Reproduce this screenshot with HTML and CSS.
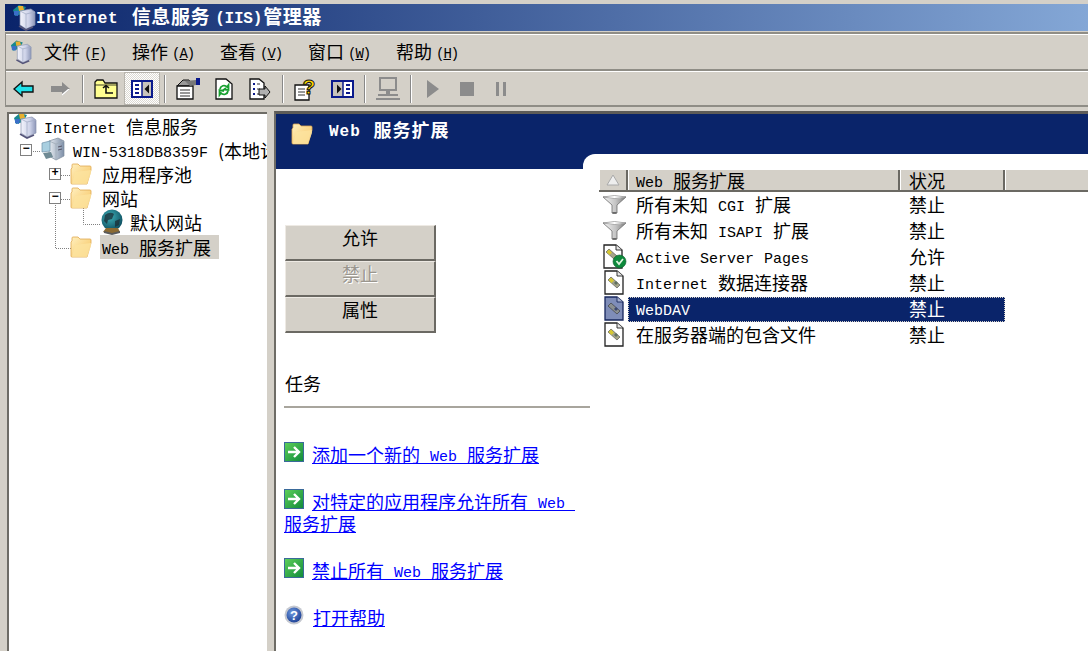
FILE: index.html
```html
<!DOCTYPE html>
<html lang="zh-CN">
<head>
<meta charset="utf-8">
<title>Internet 信息服务 (IIS)管理器</title>
<link rel="stylesheet" href="styles.css">
</head>
<body>
<svg class="defs" width="0" height="0">
  <defs>
    <linearGradient id="fold" x1="0" y1="0" x2="1" y2="1"><stop offset="0" stop-color="#fff0c0"/><stop offset="1" stop-color="#f6c25c"/></linearGradient>
    <linearGradient id="box" x1="0" y1="0" x2="1" y2="0"><stop offset="0" stop-color="#f2f3fb"/><stop offset=".6" stop-color="#cdd2e8"/><stop offset="1" stop-color="#8d97b8"/></linearGradient>
    <linearGradient id="sbox" x1="0" y1="0" x2="1" y2="0"><stop offset="0" stop-color="#e8edf2"/><stop offset="1" stop-color="#7e8fa8"/></linearGradient>
    <linearGradient id="green" x1="0" y1="0" x2="1" y2="1"><stop offset="0" stop-color="#5fd05a"/><stop offset="1" stop-color="#0f8a3a"/></linearGradient>
    <linearGradient id="cone" x1="0" y1="0" x2="1" y2="0"><stop offset="0" stop-color="#f4f4f4"/><stop offset=".55" stop-color="#c4c4c4"/><stop offset="1" stop-color="#7c7c7c"/></linearGradient>
    <radialGradient id="hb" cx=".4" cy=".35" r=".7"><stop offset="0" stop-color="#6f9be0"/><stop offset="1" stop-color="#1c3f94"/></radialGradient>
    <radialGradient id="gl" cx=".4" cy=".35" r=".7"><stop offset="0" stop-color="#3fb0b8"/><stop offset="1" stop-color="#0b4a5c"/></radialGradient>
    <symbol id="i-folder" viewBox="0 0 22 22">
      <path d="M1 6 L1 20 Q1 21 2 21 L17 21 L21 7 L21 4 Q21 3 20 3 L10 3 L8 1 L3 1 Q2 1 2 2 L2 5 Z" fill="url(#fold)" stroke="#e0a850" stroke-width=".8"/>
      <path d="M2 21 L5 9 L21 7 L21 10 L17 21 Z" fill="#fde3a0" opacity=".8"/>
    </symbol>
    <symbol id="i-app" viewBox="0 0 24 26">
      <path d="M1 5 L7 0 L14 2 L10 9 L3 11 Z" fill="#17898f"/>
      <path d="M6 1 L11 1 L12 5 L7 6 Z" fill="#e8b030"/>
      <path d="M2 6 L7 6 L6 11 L2 10 Z" fill="#3a6fc8"/>
      <path d="M8 6 L19 4 L23 7 L23 20 L14 24 L8 20 Z" fill="url(#box)" stroke="#8a94b0" stroke-width=".7"/>
      <path d="M8 6 L14 9 L23 7 M14 9 L14 24" fill="none" stroke="#a5adc6" stroke-width=".8"/>
      <path d="M7 21 L14 25 L21 22" fill="none" stroke="#55557a" stroke-width="1.6"/>
    </symbol>
    <symbol id="i-server" viewBox="0 0 24 26">
      <path d="M8 4 L17 1 L23 4 L23 19 L15 23 L8 19 Z" fill="url(#sbox)" stroke="#7e8c9c" stroke-width=".7"/>
      <path d="M8 4 L15 7 L23 4 M15 7 L15 23" fill="none" stroke="#a0acb8" stroke-width=".8"/>
      <path d="M1 6 L9 4 L9 14 L1 15 Z" fill="#a9cfe0" stroke="#6f8fa8" stroke-width=".7"/>
      <path d="M2 16 L10 15 L12 20 L5 22 Z" fill="#6f8a94"/>
      <path d="M17 10 L21 9 M17 13 L21 12" stroke="#556" stroke-width="1"/>
    </symbol>
    <symbol id="i-globe" viewBox="0 0 24 26">
      <circle cx="12" cy="11" r="10.5" fill="url(#gl)"/>
      <path d="M5 6 Q10 2 14 5 L12 10 L8 11 L7 15 L4 12 Z M15 12 L20 10 L19 16 L15 18 Z" fill="#1b2c34" opacity=".75"/>
      <path d="M6 19 L3 23 L11 25 L20 23 L18 19 Z" fill="#8b6a32"/>
      <path d="M4 22 L12 24 L20 22 L20 24 L12 26 L4 24 Z" fill="#5b5b5b"/>
    </symbol>
    <symbol id="i-filter" viewBox="0 0 25 19">
      <path d="M1 2 L24 2 L15 10 L15 18 L10 18 L10 10 Z" fill="url(#cone)" stroke="#6c6c6c" stroke-width=".8"/>
      <path d="M1 2 Q12.5 -1 24 2 Q12.5 5 1 2 Z" fill="#fff" stroke="#8c8c8c" stroke-width=".7"/>
      <path d="M10.5 18 L14.5 18" stroke="#444" stroke-width="1.2"/>
    </symbol>
    <symbol id="i-doc" viewBox="0 0 20 25">
      <path d="M1 1 L13 1 L19 6 L19 24 L1 24 Z" fill="#fff" stroke="#222" stroke-width="1.3"/>
      <path d="M13 1 L13 6 L19 6" fill="#e8e8e8" stroke="#222" stroke-width=".9"/>
      <path d="M4 10 L7 7 L16 15 L13 18 Z" fill="#a4a488" stroke="#444" stroke-width=".6"/>
      <path d="M4.500 10 L7 7.500 L10 10.500 L7.500 13 Z" fill="#d6c832"/>
      <path d="M10 13 L12 11 L14 13 L12 15 Z" fill="#5f6f5f"/>
    </symbol>
    <symbol id="i-docsel" viewBox="0 0 20 25">
      <path d="M1 1 L13 1 L19 6 L19 24 L1 24 Z" fill="#7f8db8" stroke="#16265c" stroke-width="1.3"/>
      <path d="M13 1 L13 6 L19 6" fill="#a4aecc" stroke="#16265c" stroke-width=".9"/>
      <path d="M4 10 L7 7 L16 15 L13 18 Z" fill="#8a8f90" stroke="#333" stroke-width=".6"/>
      <path d="M10 13 L12 11 L14 13 L12 15 Z" fill="#3c4870"/>
    </symbol>
    <symbol id="i-docok" viewBox="0 0 24 25">
      <path d="M1 1 L13 1 L19 6 L19 24 L1 24 Z" fill="#fff" stroke="#222" stroke-width="1.3"/>
      <path d="M13 1 L13 6 L19 6" fill="#e8e8e8" stroke="#222" stroke-width=".9"/>
      <path d="M3 8 L6 5 L14 12 L11 15 Z" fill="#a4a488" stroke="#444" stroke-width=".6"/>
      <path d="M3.500 8 L6 5.500 L9 8.500 L6.500 11 Z" fill="#d6c832"/>
      <circle cx="16.500" cy="17.500" r="6.500" fill="#0d8a3c" stroke="#0a5a28" stroke-width=".6"/>
      <path d="M13.500 17 L16 20 L20 15" fill="none" stroke="#dff5df" stroke-width="1.8"/>
    </symbol>
    <symbol id="i-go" viewBox="0 0 20 20">
      <rect x=".5" y=".5" width="19" height="19" fill="url(#green)" stroke="#3a6a9a"/>
      <path d="M4 10 L14 10 M10 5 L15 10 L10 15" fill="none" stroke="#fff" stroke-width="2.4"/>
    </symbol>
    <symbol id="i-help" viewBox="0 0 20 20">
      <circle cx="10" cy="10" r="9.500" fill="#c5c8d0"/>
      <circle cx="10" cy="10" r="7.500" fill="url(#hb)"/>
      <text class="help-q" x="10" y="15">?</text>
    </symbol>
  </defs>
</svg>

<div class="window">
  <div class="titlebar">
    <svg class="title-icon"><use href="#i-app"/></svg>
    <span class="title-text"><span class="lat">Internet </span>信息服务<span class="lat tight">(IIS)</span>管理器</span>
  </div>

  <div class="bars">
    <div class="menubar">
      <svg class="menu-icon"><use href="#i-app"/></svg>
      <span class="menu-item">文件<span class="mn">(<u>F</u>)</span></span>
      <span class="menu-item">操作<span class="mn">(<u>A</u>)</span></span>
      <span class="menu-item">查看<span class="mn">(<u>V</u>)</span></span>
      <span class="menu-item">窗口<span class="mn">(<u>W</u>)</span></span>
      <span class="menu-item">帮助<span class="mn">(<u>H</u>)</span></span>
    </div>
    <div class="toolbar">
      <span class="tb"><svg width="22" height="18" viewBox="0 0 22 18"><path d="M1 9 L9 2 L9 6 L20 6 L20 12 L9 12 L9 16 Z" fill="#1fe0e8" stroke="#111" stroke-width="1.4"/></svg></span>
      <span class="tb"><svg width="22" height="18" viewBox="0 0 22 18"><path d="M21 9 L13 2 L13 6 L2 6 L2 12 L13 12 L13 16 Z" fill="#8c8c8c"/><path d="M13 16 L21 9 L19 9 L13 14Z" fill="#fff"/></svg></span>
      <span class="sep"></span>
      <span class="tb"><svg width="24" height="20" viewBox="0 0 24 20"><path d="M1 19 L1 3 L3 1 L9 1 L11 4 L23 4 L23 19 Z" fill="#ffff90" stroke="#111" stroke-width="1.3"/><path d="M1 6 L23 6" stroke="#111" stroke-width=".8"/><path d="M9 9 L12 6.500 L15 9 M12 7 L12 14 L19 14" fill="none" stroke="#111" stroke-width="1.600"/></svg></span>
      <span class="tb on"><svg width="22" height="18" viewBox="0 0 22 18"><rect x="1" y="1" width="20" height="16" fill="#fff" stroke="#0a1a8c" stroke-width="2"/><rect x="11" y="2" width="9" height="14" fill="#c8c4bc"/><path d="M11 1 L11 17" stroke="#0a1a8c" stroke-width="1.500"/><path d="M4 5 H8 M4 9 H8 M4 13 H8" stroke="#0a1a8c" stroke-width="1.800"/><path d="M18 4.500 L13.500 9 L18 13.500 Z" fill="#111"/></svg></span>
      <span class="sep"></span>
      <span class="tb"><svg width="26" height="22" viewBox="0 0 26 22"><path d="M2 8 L8 2 L14 2 L18 8 Z" fill="#999" stroke="#111"/><path d="M2 8 L18 8 L18 21 L2 21 Z" fill="#fff" stroke="#111" stroke-width="1.300"/><path d="M5 12 H15 M5 15 H15 M5 18 H15" stroke="#333" stroke-width="1.200"/><path d="M10 3 L21 2 L21 7 L15 8 Z" fill="#777"/><path d="M21 0 H25 V7 H21Z" fill="#0a1a8c"/></svg></span>
      <span class="tb"><svg width="18" height="22" viewBox="0 0 18 22"><path d="M1 1 L11 1 L17 6 L17 21 L1 21 Z" fill="#fff" stroke="#111" stroke-width="1.300"/><path d="M5 11 A4 4 0 0 1 12 9 L13.500 7 L13.500 12 L9 11.500 L11 10" fill="none" stroke="#18a030" stroke-width="1.800"/><path d="M13 13 A4 4 0 0 1 6 15 L4.500 17 L4.500 12 L9 13" fill="none" stroke="#18a030" stroke-width="1.800"/></svg></span>
      <span class="tb"><svg width="22" height="22" viewBox="0 0 22 22"><path d="M1 1 L10 1 L15 5 L15 21 L1 21 Z" fill="#fff" stroke="#111" stroke-width="1.300"/><path d="M4 6 H6 M4 11 H6 M4 16 H6" stroke="#0a1a8c" stroke-width="2"/><path d="M8 6 H11 M8 11 H11 M8 16 H11" stroke="#333" stroke-width="1.200"/><path d="M10 11 L16 11 L16 8 L21 14 L16 20 L16 17 L10 17 Z" fill="#b0b0b0" stroke="#111"/></svg></span>
      <span class="sep"></span>
      <span class="tb"><svg width="24" height="24" viewBox="0 0 24 24"><path d="M1 8 L15 8 L15 23 L1 23 Z" fill="#fff" stroke="#111" stroke-width="1.300"/><path d="M4 12 H11 M4 15 H11 M4 18 H11" stroke="#333"/><text class="tb-q" x="15" y="17">?</text></svg></span>
      <span class="tb"><svg width="23" height="18" viewBox="0 0 23 18"><rect x="1" y="1" width="21" height="16" fill="#fff" stroke="#0a1a8c" stroke-width="2"/><rect x="2" y="2" width="10" height="14" fill="#c8c4bc"/><path d="M12 1 L12 17" stroke="#0a1a8c" stroke-width="1.500"/><path d="M15 5 H19 M15 9 H19 M15 13 H19" stroke="#0a1a8c" stroke-width="1.800"/><path d="M6 4.500 L10.500 9 L6 13.500 Z" fill="#111"/></svg></span>
      <span class="sep"></span>
      <span class="tb"><svg width="26" height="24" viewBox="0 0 26 24"><rect x="5" y="1" width="16" height="12" fill="none" stroke="#8c8c8c" stroke-width="2"/><path d="M11 14 H15 V17 H11Z M3 17 H23 V19 H3Z" fill="#8c8c8c"/><path d="M1 22 H25" stroke="#8c8c8c" stroke-width="2"/></svg></span>
      <span class="sep"></span>
      <span class="tb nar"><svg width="14" height="18" viewBox="0 0 14 18"><path d="M1 0 L13 9 L1 18 Z" fill="#8c8c8c"/></svg></span>
      <span class="tb nar"><svg width="14" height="14" viewBox="0 0 14 14"><rect width="14" height="14" fill="#8c8c8c"/></svg></span>
      <span class="tb nar"><svg width="12" height="14" viewBox="0 0 12 14"><path d="M1 0 H4 V14 H1Z M8 0 H11 V14 H8Z" fill="#8c8c8c"/></svg></span>
    </div>
  </div>

  <div class="main">
    <div class="tree">
      <svg class="tree-lines" width="120" height="140" viewBox="0 0 120 140">
        <path d="M33 42.500 H41 M61 66.500 H71 M61 90.500 H71 M55.500 96 V139.500 H71 M83.500 99 V115.500 H100" fill="none" stroke="#808080" stroke-dasharray="1 1"/>
      </svg>
      <div class="node l0"><svg class="ti ti-app"><use href="#i-app"/></svg><span class="tl"><span class="lat">Internet </span>信息服务</span></div>
      <div class="node l1"><span class="exp">−</span><svg class="ti ti-sv"><use href="#i-server"/></svg><span class="tl"><span class="lat">WIN-5318DB8359F </span>(本地计算机)</span></div>
      <div class="node l2"><span class="exp">+</span><svg class="ti ti-f"><use href="#i-folder"/></svg><span class="tl">应用程序池</span></div>
      <div class="node l2"><span class="exp">−</span><svg class="ti ti-f"><use href="#i-folder"/></svg><span class="tl">网站</span></div>
      <div class="node l3"><svg class="ti ti-g"><use href="#i-globe"/></svg><span class="tl">默认网站</span></div>
      <div class="node l2b"><svg class="ti ti-f"><use href="#i-folder"/></svg><span class="tl sel"><span class="lat">Web </span>服务扩展</span></div>
    </div>

    <div class="splitter"></div>

    <div class="detail">
      <div class="banner">
        <svg class="banner-icon"><use href="#i-folder"/></svg>
        <span class="banner-text"><span class="lat">Web </span>服务扩展</span>
      </div>
      <div class="detail-body">
        <div class="side">
          <div class="btns">
            <div class="btn">允许</div>
            <div class="btn off">禁止</div>
            <div class="btn">属性</div>
          </div>
          <div class="tasks-h">任务</div>
          <div class="task t1"><svg class="go"><use href="#i-go"/></svg><a href="#">添加一个新的<span class="lat"> Web </span>服务扩展</a></div>
          <div class="task t2"><svg class="go"><use href="#i-go"/></svg><a href="#">对特定的应用程序允许所有<span class="lat"> Web&nbsp;</span><br>服务扩展</a></div>
          <div class="task t3"><svg class="go"><use href="#i-go"/></svg><a href="#">禁止所有<span class="lat"> Web </span>服务扩展</a></div>
          <div class="task t4"><svg class="go hp"><use href="#i-help"/></svg><a href="#">打开帮助</a></div>
        </div>
        <div class="list">
          <div class="lhead">
            <span class="lh c0"><svg width="14" height="12" viewBox="0 0 14 12"><path d="M7 1 L13 11 L1 11 Z" fill="#eee" stroke="#aaa"/></svg></span>
            <span class="lh c1"><span class="lat">Web </span>服务扩展</span>
            <span class="lh c2">状况</span>
            <span class="lh c3"></span>
          </div>
          <div class="row"><span class="ri"><svg class="ic-f"><use href="#i-filter"/></svg></span><span class="c1t">所有未知<span class="lat"> CGI </span>扩展</span><span class="c2t">禁止</span></div>
          <div class="row"><span class="ri"><svg class="ic-f"><use href="#i-filter"/></svg></span><span class="c1t">所有未知<span class="lat"> ISAPI </span>扩展</span><span class="c2t">禁止</span></div>
          <div class="row"><span class="ri"><svg class="ic-d2"><use href="#i-docok"/></svg></span><span class="c1t"><span class="lat">Active Server Pages</span></span><span class="c2t">允许</span></div>
          <div class="row"><span class="ri"><svg class="ic-d"><use href="#i-doc"/></svg></span><span class="c1t"><span class="lat">Internet </span>数据连接器</span><span class="c2t">禁止</span></div>
          <div class="row active"><span class="ri"><svg class="ic-d"><use href="#i-docsel"/></svg></span><span class="selbar"><span class="c1t"><span class="lat">WebDAV</span></span><span class="c2t">禁止</span></span></div>
          <div class="row"><span class="ri"><svg class="ic-d"><use href="#i-doc"/></svg></span><span class="c1t">在服务器端的包含文件</span><span class="c2t">禁止</span></div>
        </div>
      </div>
    </div>
  </div>
</div>
</body>
</html>
```
FILE: styles.css
```css
* { box-sizing: border-box; }
html, body { margin: 0; padding: 0; }
body {
  width: 1088px; height: 651px; overflow: hidden;
  background: #d4d0c8; color: #000;
  font-family: "Noto Sans CJK SC", "Liberation Mono", monospace;
  font-size: 18px; line-height: 24px;
}
.defs { position: absolute; }
.lat { font-family: "Liberation Mono", monospace; font-size: 15px; line-height: 12px; word-spacing: 1px; vertical-align: 1px; }
.window { display: flex; flex-direction: column; height: 651px; padding-top: 4px; }

.titlebar {
  height: 27px; margin-left: 5px; flex: none;
  background: linear-gradient(90deg, #0a246a 0%, #84a7d6 100%);
  display: flex; align-items: center; color: #fff; font-weight: 700;
}
.title-icon { width: 24px; height: 26px; margin-left: 7px; flex: none; }
.title-text { font-size: 19px; letter-spacing: .6px; white-space: nowrap; padding-bottom: 3px; }
.title-text .lat { font-size: 16px; letter-spacing: .7px; font-weight: 700; margin-right: 2px; }
.title-text .tight { margin: 0 1px 0 5px; letter-spacing: -.2px; }

.bars { margin-left: 5px; border-left: 1px solid #8f8d86; border-top: 2px solid #8f8d86; margin-top: 1px; border-bottom: 2px solid #8f8d86; height: 75px; flex: none; }
.menubar { height: 37px; display: flex; align-items: center; border-top: 1px solid #fff; border-bottom: 2px solid #8f8d86; padding-left: 4px; }
.menu-icon { width: 22px; height: 25px; flex: none; margin-right: 12px; }
.menu-item { width: 88px; flex: none; white-space: nowrap; padding-bottom: 3px; }
.mn { font-family: "Liberation Mono", monospace; font-size: 14px; line-height: 12px; margin-left: 4px; letter-spacing: -1px; position: relative; top: -1px; }
.toolbar { height: 34px; display: flex; align-items: center; border-top: 1px solid #fff; }
.tb { width: 36px; height: 33px; flex: none; display: flex; align-items: center; justify-content: center; }
.tb.nar { width: 34px; }
.tb.on {
  background: repeating-conic-gradient(#fff 0 25%, #dcd9d2 0 50%) 0 0 / 2px 2px;
  border: 1px solid #b8b5ae;
}
.sep { width: 10px; height: 28px; flex: none; background: linear-gradient(90deg, transparent 4px, #888 4px, #888 5px, #fff 5px, #fff 6px, transparent 6px); }
.tb-q { font: 700 21px "Liberation Sans", sans-serif; fill: #ffd800; stroke: #111; stroke-width: 1px; text-anchor: middle; }
.help-q { font: 700 13px "Liberation Sans", sans-serif; fill: #fff; text-anchor: middle; }

.main { flex: 1; min-height: 0; display: flex; margin-top: 4px; padding-left: 7px; }
.tree {
  width: 260px; flex: none; background: #fff; position: relative; overflow: hidden; margin-top: 1px;
  border-top: 2px solid #6e6c66; border-left: 2px solid #6e6c66;
}
.tree-lines { position: absolute; left: -9px; top: -5px; }
.node { height: 24px; display: flex; align-items: center; white-space: nowrap; position: relative; }
.l0 { padding-left: 4px; }
.l1 { padding-left: 11px; }
.l2 { padding-left: 40px; }
.l2b { padding-left: 61px; margin-top: 1px; }
.l3 { padding-left: 91px; }
.exp {
  width: 12px; height: 12px; border: 1px solid #808080; background: #fff; flex: none;
  font: 700 12px/9px "Liberation Mono", monospace; text-align: center;
}
.ti { flex: none; }
.ti-app { width: 24px; height: 26px; margin-right: 7px; }
.ti-sv { width: 24px; height: 26px; margin-left: 9px; margin-right: 8px; }
.ti-f { width: 22px; height: 22px; margin-left: 9px; margin-right: 10px; }
.l2b .ti-f { margin-left: 0; margin-right: 8px; }
.ti-g { width: 24px; height: 26px; margin-right: 6px; }
.tl { display: block; }
.sel { background: #d4d0c8; height: 24px; width: 119px; padding-left: 2px; }

.splitter { width: 7px; flex: none; }
.detail { flex: 1; min-width: 0; display: flex; flex-direction: column; background: #fff; border-left: 2px solid #6e6c66; border-top: 3px solid #5e5c58; }
.banner { height: 55px; flex: none; background: #0a246a; display: flex; align-items: flex-start; padding-left: 15px; padding-top: 9px; position: relative; }
.banner::after {
  content: ""; position: absolute; left: 307px; right: 0; bottom: 0; height: 15px;
  background: #fff; border-top-left-radius: 12px;
}
.banner-icon { width: 22px; height: 22px; flex: none; margin-right: 16px; }
.banner-text { color: #fff; font-weight: 700; font-size: 18px; letter-spacing: 1px; line-height: 18px; margin-top: -3px; white-space: nowrap; }
.banner-text .lat { font-weight: 700; font-size: 16px; margin-right: 1px; }

.detail-body { flex: 1; display: flex; min-height: 0; }
.side { width: 323px; flex: none; padding: 56px 0 0 8px; }
.btns { width: 151px; margin-left: 1px; display: flex; flex-direction: column; }
.btn {
  height: 36px; background: #d4d0c8; text-align: center; line-height: 22px;
  border-top: 1px solid #eeeae4; border-left: 1px solid #eeeae4;
  border-right: 2px solid #6b6963; border-bottom: 2px solid #6b6963;
}
.btn.off { color: #9a968e; text-shadow: 1px 1px 0 #fff; }
.tasks-h { margin-top: 38px; height: 37px; line-height: 24px; width: 306px; border-bottom: 2px solid #a8a59d; padding-left: 1px; }
.task { white-space: nowrap; }
.task a { color: #0000ff; text-decoration: underline; }
.go { width: 20px; height: 20px; margin: -8px 8px 0 0; vertical-align: 0; }
.go.hp { margin-right: 9px; }
.t1 { margin-top: 34px; }
.t2 { margin-top: 24px; line-height: 22px; }
.t3 { margin-top: 24px; }
.t4 { margin-top: 23px; }

.list { flex: 1; min-width: 0; margin-top: 1px; }
.lhead { height: 22px; display: flex; background: #d4d0c8; border-bottom: 2px solid #6b6963; margin-bottom: -1px; }
.lh { height: 20px; line-height: 20px; border-right: 2px solid #6b6963; border-left: 1px solid #fff; flex: none; padding-left: 7px; white-space: nowrap; }
.c0 { width: 29px; padding-left: 6px; display: flex; align-items: center; }
.c1 { width: 272px; }
.c2 { width: 105px; padding-left: 8px; }
.c3 { flex: 1; border-right: 0; }
.row { height: 26px; display: flex; align-items: center; white-space: nowrap; }
.ri { width: 29px; flex: none; display: flex; justify-content: center; padding-left: 1px; }
.ic-f { width: 25px; height: 19px; }
.ic-d { width: 20px; height: 25px; }
.ic-d2 { width: 24px; height: 25px; margin-left: 2px; }
.c1t { width: 281px; padding-left: 8px; flex: none; }
.c2t { width: 96px; flex: none; }
.selbar { display: flex; width: 377px; height: 25px; align-items: center; background: #0a246a; color: #fff; outline: 1px dotted #d4d0c8; outline-offset: -1px; align-self: flex-end; margin-bottom: -1px; padding-bottom: 4px; }
```
